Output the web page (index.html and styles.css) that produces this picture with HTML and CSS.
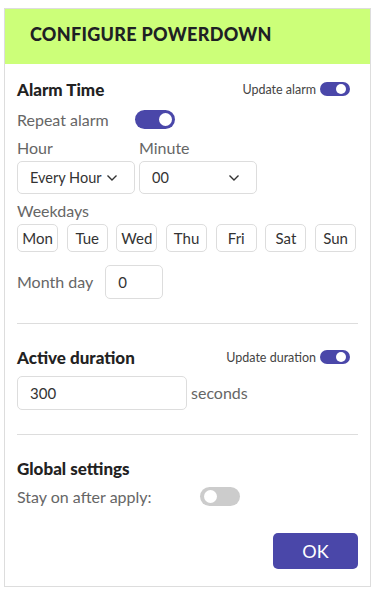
FILE: index.html
```html
<!DOCTYPE html>
<html lang="en">
<head>
    <meta charset="UTF-8">
    <meta name="viewport" content="width=device-width, initial-scale=1.0">
    <title>Configure powerdown</title>
    <link rel="stylesheet" href="styles.css">
</head>
<body>
    <div class="panel">
        <div class="panel-head">
            <h1>CONFIGURE POWERDOWN</h1>
        </div>
        <div class="panel-body">
            <div class="section first">
                <div class="section-head">
                    <h2>Alarm Time</h2>
                    <label class="update">Update alarm <span class="switch small on"></span></label>
                </div>
                <div class="row repeat">
                    <span class="label">Repeat alarm</span>
                    <span class="switch on"></span>
                </div>
                <div class="time-row">
                    <div class="field">
                        <span class="label">Hour</span>
                        <div class="select">Every Hour <svg width="12" height="8" viewBox="0 0 12 8"><path d="M1.5 1.5 6 6l4.5-4.5" fill="none" stroke="#333" stroke-width="1.4"/></svg></div>
                    </div>
                    <div class="field">
                        <span class="label">Minute</span>
                        <div class="select">00 <svg width="12" height="8" viewBox="0 0 12 8"><path d="M1.5 1.5 6 6l4.5-4.5" fill="none" stroke="#333" stroke-width="1.4"/></svg></div>
                    </div>
                </div>
                <span class="label weekdays-label">Weekdays</span>
                <div class="days">
                    <button>Mon</button>
                    <button>Tue</button>
                    <button>Wed</button>
                    <button>Thu</button>
                    <button>Fri</button>
                    <button>Sat</button>
                    <button>Sun</button>
                </div>
                <div class="row monthday">
                    <span class="label">Month day</span>
                    <div class="input small-input">0</div>
                </div>
            </div>
            <hr>
            <div class="section">
                <div class="section-head">
                    <h2>Active duration</h2>
                    <label class="update">Update duration <span class="switch small on"></span></label>
                </div>
                <div class="row duration">
                    <div class="input wide-input">300</div>
                    <span class="label">seconds</span>
                </div>
            </div>
            <hr>
            <div class="section">
                <div class="section-head">
                    <h2>Global settings</h2>
                </div>
                <div class="row stay">
                    <span class="label">Stay on after apply:</span>
                    <span class="switch off"></span>
                </div>
            </div>
            <div class="actions">
                <button class="ok">OK</button>
            </div>
        </div>
    </div>
</body>
</html>
```

FILE: styles.css
```css
body {
    font-family: Lato, "Noto Sans", sans-serif;
    margin: 0;
    padding: 0;
    background-color: #fff;
    color: #555;
}
.panel {
    width: 367px;
    height: 579px;
    margin: 8px 0 0 4px;
    border: 1px solid #ddd;
    box-sizing: border-box;
}
.panel-head {
    background-color: #ccff79;
    height: 55px;
    box-sizing: border-box;
    display: flex;
    align-items: center;
    padding: 0 0 6px 25px;
}
.panel-head h1 {
    margin: 0;
    font-size: 18px;
    font-weight: 900;
    color: #1e2124;
    letter-spacing: 0.3px;
}
.panel-body {
    padding: 0 12px;
}
.section-head {
    display: flex;
    align-items: center;
    justify-content: space-between;
    height: 20px;
    margin-top: 23px;
}
.section.first .section-head {
    margin-top: 15px;
}
.section-head h2 {
    margin: 0;
    font-size: 17px;
    font-weight: 900;
    color: #222;
}
.update {
    display: flex;
    align-items: center;
    gap: 4px;
    font-size: 12.5px;
    color: #444;
    margin-right: 8px;
}
.label {
    font-size: 16px;
    line-height: 18px;
    color: #666;
}
.row {
    display: flex;
    align-items: center;
}
.repeat {
    margin-top: 11px;
    gap: 26px;
    height: 19px;
}
.switch {
    display: inline-block;
    position: relative;
    width: 40px;
    height: 19px;
    border-radius: 10px;
    background-color: #4a47a9;
}
.switch::after {
    content: "";
    position: absolute;
    top: 3px;
    right: 3px;
    width: 13px;
    height: 13px;
    border-radius: 50%;
    background-color: #fff;
}
.switch.small {
    width: 30px;
    height: 14px;
}
.switch.small::after {
    top: 2px;
    right: 4px;
    width: 10px;
    height: 10px;
}
.switch.off {
    background-color: #ccc;
}
.switch.off::after {
    right: auto;
    left: 4px;
}
.time-row {
    display: flex;
    gap: 4px;
    margin-top: 10px;
}
.field {
    display: flex;
    flex-direction: column;
    gap: 4px;
}
.select {
    width: 118px;
    height: 33px;
    box-sizing: border-box;
    border: 1px solid #ddd;
    border-radius: 5px;
    display: flex;
    align-items: center;
    justify-content: space-between;
    padding: 0 16px 0 12px;
    font-size: 14.5px;
    color: #333;
}
.weekdays-label {
    display: block;
    margin-top: 8px;
}
.days {
    display: flex;
    gap: 8.7px;
    margin-top: 4px;
}
.days button {
    width: 41px;
    height: 28px;
    padding: 0;
    border: 1px solid #ddd;
    border-radius: 5px;
    background: #fff;
    font-family: inherit;
    font-size: 15px;
    color: #333;
}
.monthday {
    margin-top: 13px;
    gap: 12px;
}
.input {
    height: 34px;
    box-sizing: border-box;
    border: 1px solid #ddd;
    border-radius: 5px;
    display: flex;
    align-items: center;
    padding: 0 12px;
    font-size: 15px;
    color: #333;
}
.small-input {
    width: 58px;
}
.wide-input {
    width: 170px;
}
.duration {
    margin-top: 9px;
    gap: 4px;
}
hr {
    border: 0;
    border-top: 1px solid #ddd;
    margin: 24px 0 0;
}
.stay {
    margin-top: 9px;
    gap: 48px;
}
.actions {
    display: flex;
    justify-content: flex-end;
    margin-top: 27px;
}
.ok {
    width: 85px;
    height: 36px;
    border: 0;
    border-radius: 5px;
    background-color: #4a47a9;
    color: #fff;
    font-family: inherit;
    font-size: 18px;
}
```
